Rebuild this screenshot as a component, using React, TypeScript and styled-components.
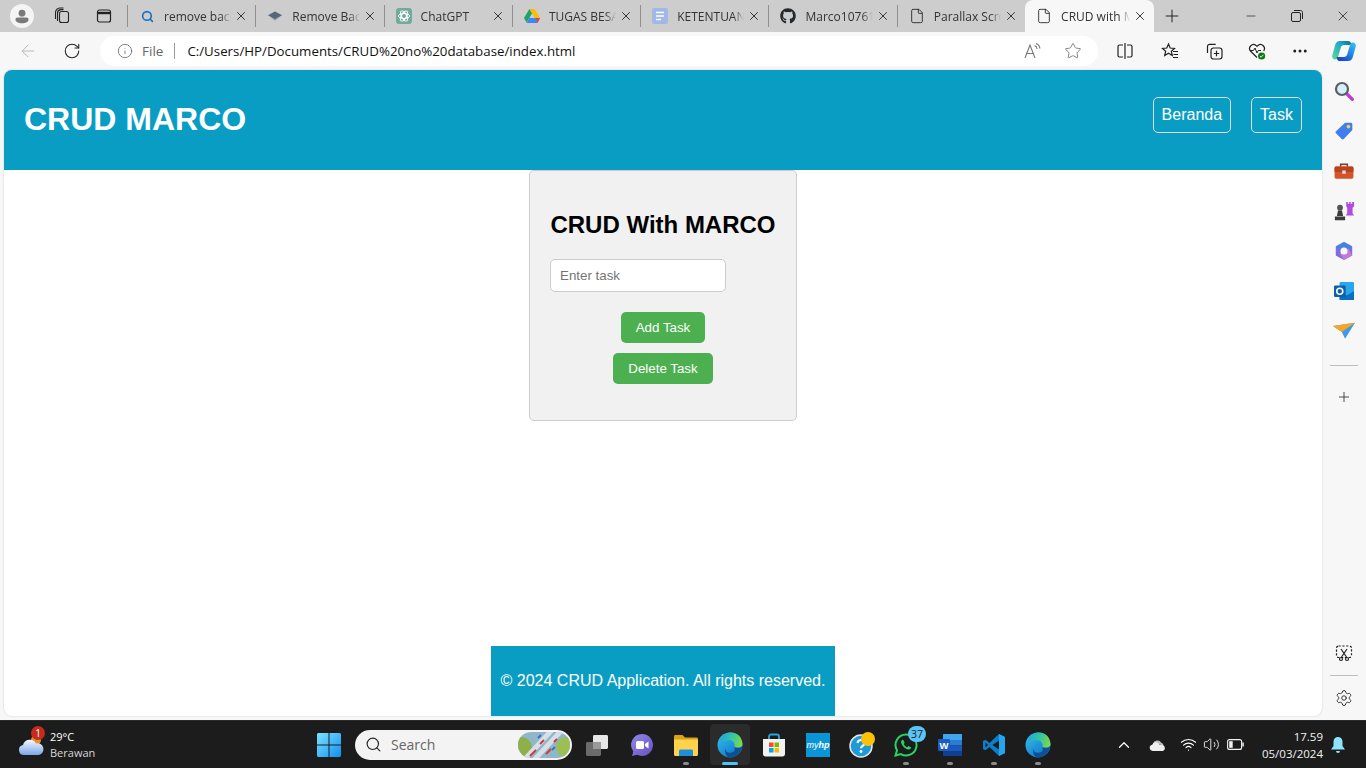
import React from "react";
import styled, { createGlobalStyle } from "styled-components";
import { FaGithub } from "react-icons/fa";
import {
  ArrowLeft, RotateCw, Info, Star, X, Plus, Minus, Search, MoreHorizontal, Settings,
  ChevronUp, Wifi, Volume2, File as FileIcon,
} from "lucide-react";

const Global = createGlobalStyle`
  html, body { margin: 0; padding: 0; height: 100%; overflow: hidden; }
  body { background: #f7f7f7; font-family: "Liberation Sans", Arial, sans-serif; }
  * { box-sizing: border-box; }
`;

const UI = `"Open Sans", "Noto Sans", sans-serif`;
const BRAND = "#0a9dc3";

const Shell = styled.div`display: flex; flex-direction: column; width: 1366px; height: 768px;`;

const TabStrip = styled.div`display: flex; align-items: center; height: 32px; background: #cdcdcd; flex: none;`;
const StripLeft = styled.div`display: flex; align-items: center; width: 127px; height: 32px; flex: none; position: relative;`;
const StripSlot = styled.div<{ $w: number }>`width: ${p => p.$w}px; display: flex; align-items: center; justify-content: center; flex: none;`;
const Tab = styled.div<{ $active?: boolean; $sep?: boolean }>`
  display: flex; align-items: center; flex: none; height: 32px; width: ${p => (p.$active ? 129 : 128.3)}px;
  padding: 0 6px 0 11px; color: #333; font: 12px ${UI};
  background: ${p => (p.$active ? "#f7f7f7" : "transparent")};
  border-radius: ${p => (p.$active ? "8px 8px 0 0" : "0")};
  border-left: ${p => (p.$sep ? "1px solid #8f8f8f" : "none")};
  ${p => p.$sep ? "border-image: linear-gradient(#cdcdcd 6px, #8f8f8f 6px, #8f8f8f 26px, #cdcdcd 26px) 1;" : ""}
`;
const TabIcon = styled.span`width: 16px; height: 16px; flex: none; display: flex; align-items: center; justify-content: center; margin-right: 9px;`;
const TabLabel = styled.span`
  flex: 1; white-space: nowrap; overflow: hidden; min-width: 0;
  -webkit-mask-image: linear-gradient(90deg, #000 84%, transparent 100%);
  mask-image: linear-gradient(90deg, #000 84%, transparent 100%);
`;
const TabClose = styled.span`width: 16px; display: flex; justify-content: center; flex: none; margin-left: 2px;`;
const WindowControls = styled.div`display: flex; margin-left: auto; color: #222;`;
const WinBtn = styled.div`width: 46px; height: 32px; display: flex; align-items: center; justify-content: center;`;

const Toolbar = styled.div`display: flex; align-items: center; height: 38px; background: #f7f7f7; flex: none;`;
const NavSlot = styled.div<{ $w: number }>`width: ${p => p.$w}px; display: flex; justify-content: center; align-items: center; flex: none; color: #222;`;
const AddressBar = styled.div`
  width: 998px; height: 30px; margin: 0 5px 0 0; background: #fff; border-radius: 15px; flex: none;
  display: flex; align-items: center; padding: 0 16px 0 17px; color: #222;
`;
const FileLabel = styled.span`font: 13.5px ${UI}; color: #666; margin-left: 9px;`;
const AddrSep = styled.span`width: 1px; height: 16px; background: #999; margin: 0 13px 0 11px;`;
const Url = styled.span`font: 13.3px ${UI}; color: #111; flex: 1; white-space: nowrap; margin-left: -1px;`;
const AddrActions = styled.div`display: flex; align-items: center; gap: 22px; color: #777;`;
const ActionRow = styled.div`display: flex; align-items: center;`;

const Body = styled.div`display: flex; flex: 1; min-height: 0; padding: 0 0 4px 4px;`;
const Page = styled.div`
  width: 1318px; display: flex; flex-direction: column; background: #fff; border-radius: 8px;
  overflow: hidden; box-shadow: 0 0 2px rgba(0,0,0,.18);
`;
const SiteHeader = styled.header`
  height: 100px; flex: none; background: ${BRAND}; color: #fff; display: flex; align-items: center;
  justify-content: space-between; padding: 0 20px;
`;
const SiteTitle = styled.h1`font: bold 32px "Liberation Sans", Arial, sans-serif; margin: -2px 0 0;`;
const SiteNav = styled.nav`display: flex; gap: 20px; margin-top: -10px;`;
const NavLink = styled.a`
  display: block; color: #fff; font-size: 16px; padding: 8px; border: 1px solid #ddd; border-radius: 5px; line-height: 18px;
`;
const Main = styled.main`flex: 1; display: flex; justify-content: center; align-items: flex-start;`;
const Card = styled.section`
  width: 268px; height: 251px; background: #f1f1f1; border: 1px solid #ccc; border-radius: 5px;
  padding: 20px; display: flex; flex-direction: column; align-items: center;
`;
const CardTitle = styled.h2`font: bold 24px "Liberation Sans", Arial, sans-serif; color: #000; margin: 20px 0; white-space: nowrap; line-height: 28px;`;
const TaskInput = styled.input`
  align-self: flex-start; width: 176px; height: 33px; padding: 8px 9px; border: 1px solid #ccc; border-radius: 5px;
  font: 13.33px "Liberation Sans", Arial, sans-serif; background: #fff; margin: 0 0 20px; outline: none;
  &::placeholder { color: #757575; }
`;
const GreenButton = styled.button`
  height: 31px; padding: 0 15px; margin: 0 0 10px; border: none; border-radius: 5px; background: #4caf50; color: #fff;
  font: 13.33px "Liberation Sans", Arial, sans-serif;
`;
const Footer = styled.footer`
  align-self: center; width: 344px; height: 70px; background: ${BRAND}; color: #fff; font-size: 16px; flex: none;
  display: flex; align-items: center; justify-content: center; white-space: nowrap;
`;

const Side = styled.aside`width: 44px; flex: none; display: flex; flex-direction: column; align-items: center; padding-top: 1px; margin-bottom: -2px; color: #222;`;
const SideSlot = styled.div`width: 44px; height: 40px; display: flex; align-items: center; justify-content: center; flex: none;`;
const SideRule = styled.div<{ $mt: number; $mb: number }>`width: 28px; height: 1px; background: #bdbdbd; margin: ${p => p.$mt}px 0 ${p => p.$mb}px; flex: none;`;
const SideSpacer = styled.div`flex: 1;`;

const Taskbar = styled.div`
  height: 48px; flex: none; background: #1c1c1c; border-top: 1px solid #2c2c2c; display: flex; align-items: center;
  color: #fff; font: 12px ${UI};
`;
const Weather = styled.div`width: 307px; flex: none; display: flex; align-items: center; padding-left: 18px; height: 47px; position: relative;`;
const WeatherBadge = styled.span`
  position: absolute; left: 31px; top: 5px; width: 14px; height: 14px; border-radius: 50%; background: #c42b1c;
  color: #fff; font: 10px ${UI}; display: flex; align-items: center; justify-content: center;
`;
const WeatherText = styled.div`display: flex; flex-direction: column; margin-left: 4px; font: 11px/16px ${UI};`;
const WeatherSub = styled.span`color: #d6d6d6;`;
const AppBtn = styled.div<{ $state?: "on" | "active" }>`
  width: 44px; height: 47px; flex: none; display: flex; align-items: center; justify-content: center; position: relative;
  ${p => p.$state === "active" ? `&::before { content: ""; position: absolute; left: 2px; right: 2px; top: 3px; bottom: 3px; background: #2b2b2b; border-radius: 4px; }` : ""}
  ${p => p.$state ? `&::after { content: ""; position: absolute; bottom: 3px; left: 50%; height: 3px; border-radius: 2px;
      width: ${p.$state === "active" ? 16 : 6}px; margin-left: ${p.$state === "active" ? -8 : -3}px;
      background: ${p.$state === "active" ? "#4fc3f7" : "#8a8a8a"}; }` : ""}
  & > svg { position: relative; z-index: 1; }
`;
const AppBadge = styled.span<{ $bg: string }>`
  position: absolute; z-index: 2; top: 5px; left: 24px; min-width: 14px; height: 16px; padding: 0 3px; border-radius: 8px;
  background: ${p => p.$bg}; color: #10242e; font: 10.5px/16px ${UI}; text-align: center;
`;
const SearchPill = styled.div`
  width: 217px; height: 30px; margin: 0 4px; flex: none; border-radius: 15px; background: #f3f3f3; display: flex; align-items: center;
  padding: 0 2px 0 10px; color: #666; font: 14px ${UI}; gap: 9px;
`;
const SearchText = styled.span`flex: 1;`;
const Tray = styled.div`margin-left: auto; display: flex; align-items: center; padding-right: 19px; height: 47px;`;
const TraySlot = styled.div<{ $w: number }>`width: ${p => p.$w}px; display: flex; align-items: center; justify-content: center; flex: none;`;
const Clock = styled.div`display: flex; flex-direction: column; align-items: flex-end; font: 11.5px/17px ${UI}; color: #f2f2f2; margin: 0 6px 0 0;`;
const HpTile = styled.div`
  width: 24px; height: 24px; background: #0a96d6; color: #fff; font: italic 9px "Liberation Sans", sans-serif;
  display: flex; align-items: center; justify-content: center; position: relative; z-index: 1;
`;
const HpMark = styled.b`font-weight: 700;`;

const Workspaces = () => (
  <svg width="18" height="18" viewBox="0 0 18 18" fill="none" stroke="#222" strokeWidth="1.1">
    <rect x="6.5" y="4.5" width="9" height="11" rx="2" /><path d="M4.5 14V6c0-1.8 1.2-3 3-3.4h3M2.5 12V6c0-2.6 1.6-4.5 4-5h4" />
  </svg>
);
const TabsView = () => (
  <svg width="16" height="16" viewBox="0 0 16 16" fill="none" stroke="#222" strokeWidth="1.2">
    <rect x="1.5" y="2" width="13" height="12" rx="2" /><path d="M1.5 5h13" strokeWidth="2.4" />
  </svg>
);
const Profile = () => (
  <svg width="24" height="24" viewBox="0 0 24 24">
    <circle cx="12" cy="12" r="12" fill="#f4f4f4" /><circle cx="12" cy="9.2" r="3.4" fill="#7a7a7a" />
    <path d="M5.5 15.5c0-1.2 1-1.9 2-1.9h9c1 0 2 .7 2 1.9 0 2.6-2.9 3.7-6.5 3.7s-6.5-1.1-6.5-3.7z" fill="#7a7a7a" />
  </svg>
);
const Diamond = () => (
  <svg width="18" height="12" viewBox="0 0 18 12"><path d="M9 1l8 4.2L9 9.6 1 5.2z" fill="#55677a" /><path d="M3 7.2L9 11l6-3.8L9 9.6z" fill="#8b97a5" /></svg>
);
const GptIcon = () => (
  <svg width="16" height="16" viewBox="0 0 16 16">
    <rect width="16" height="16" rx="3" fill="#74aa9c" />
    <g fill="none" stroke="#fff" strokeWidth=".9"><circle cx="8" cy="8" r="2.6" /><ellipse cx="8" cy="8" rx="5.6" ry="2.6" /><ellipse cx="8" cy="8" rx="5.6" ry="2.6" transform="rotate(60 8 8)" /><ellipse cx="8" cy="8" rx="5.6" ry="2.6" transform="rotate(120 8 8)" /></g>
  </svg>
);
const DriveIcon = () => (
  <svg width="16" height="14" viewBox="0 0 16 14">
    <path d="M5.4 0h5.2l5.4 9h-5.2z" fill="#fbbc04" /><path d="M5.4 0L0 9l2.6 4.6L8 4.4z" fill="#1ea362" />
    <path d="M2.6 14L5.2 9H16l-2.6 5z" fill="#4285f4" />
    <path d="M13.4 14L16 9h-4z" fill="#ea4335" />
  </svg>
);
const DocsIcon = () => (
  <svg width="16" height="16" viewBox="0 0 16 16">
    <rect width="16" height="16" rx="2" fill="#9fb8e8" /><path d="M4 4.5h8M4 8h8M4 11.5h5" stroke="#fff" strokeWidth="1.4" />
  </svg>
);
const ReadAloud = () => (
  <svg width="18" height="16" viewBox="0 0 18 16" fill="none" stroke="#777" strokeWidth="1.1">
    <path d="M1 15L6 2l5 13M2.8 10.5h6.4" /><path d="M10.5 2.5c1.6.6 2.5 1.8 2.7 3.5M12 .5c2.4.8 3.6 2.6 3.9 5" />
  </svg>
);
const SplitScreen = () => (
  <svg width="18" height="18" viewBox="0 0 18 18" fill="none" stroke="#222" strokeWidth="1.2">
    <path d="M7 3H3.500C2.500 3 2 3.700 2 4.500v9c0 .8.500 1.500 1.500 1.500H7M11 3h3.500c1 0 1.500.7 1.500 1.500v9c0 .8-.5 1.500-1.500 1.500H11M9 1v16" />
  </svg>
);
const FavList = () => (
  <svg width="18" height="18" viewBox="0 0 18 18" fill="none" stroke="#222" strokeWidth="1.2">
    <path d="M7.5 2l1.7 4 4.3.4-3.2 2.9 1 4.2-3.8-2.3L3.7 13.5l1-4.2L1.5 6.4l4.3-.4z" /><path d="M12 9.500h5M12.500 12.500h4.500M12 15.500h5" strokeWidth="1" />
  </svg>
);
const Collections = () => (
  <svg width="18" height="18" viewBox="0 0 18 18" fill="none" stroke="#222" strokeWidth="1.2">
    <path d="M2.500 11V4.500a2.200 2.200 0 0 1 2.200-2.200h6" /><rect x="6" y="6" width="11" height="11" rx="2.400" /><path d="M11.500 8.800v5.400M8.800 11.500h5.400" />
  </svg>
);
const Health = () => (
  <svg width="18" height="18" viewBox="0 0 18 18">
    <path d="M9 15.500L2.400 9A4 4 0 0 1 8 3.400L9 4.400l1-1A4 4 0 0 1 15.600 9" fill="none" stroke="#222" strokeWidth="1.200" />
    <path d="M2 8.500h3.500l1.500-2.500 2 5 1.300-2.500H13" fill="none" stroke="#222" strokeWidth="1" />
    <circle cx="13.600" cy="14" r="3.600" fill="#107c10" /><path d="M11.900 14l1.200 1.200 2.200-2.300" stroke="#fff" strokeWidth=".9" fill="none" />
  </svg>
);
const Copilot = () => (
  <svg width="24" height="24" viewBox="0 0 24 24">
    <defs>
      <linearGradient id="cpA" x1="0" y1=".7" x2="1" y2="0"><stop offset="0" stopColor="#4fd3a0" /><stop offset=".55" stopColor="#1ba8c8" /><stop offset="1" stopColor="#0b6a8c" /></linearGradient>
      <linearGradient id="cpB" x1="1" y1="0" x2=".2" y2="1"><stop offset="0" stopColor="#3cc4f5" /><stop offset=".55" stopColor="#1f7fe8" /><stop offset="1" stopColor="#1a3fc8" /></linearGradient>
    </defs>
    <path d="M8 2h8c1.600 0 2.600.8 3 2.300L19.500 6H12c-1.600 0-2.700 1-3.200 2.500L6 18c-.5 1.500-1.300 2.500-3 2.500-2 0-3.300-2-2.700-4.200L3.200 6C3.900 3.500 5.500 2 8 2z" fill="url(#cpA)" />
    <path d="M16 22H8c-1.600 0-2.600-.8-3-2.300L4.500 18H12c1.600 0 2.700-1 3.200-2.500L18 6c.5-1.500 1.300-2.500 3-2.500 2 0 3.300 2 2.700 4.200L20.800 18c-.7 2.500-2.300 4-4.800 4z" fill="url(#cpB)" />
  </svg>
);
const Lens = () => (
  <svg width="20" height="20" viewBox="0 0 18 18">
    <path d="M11 11l5.500 5.500" stroke="#c239d6" strokeWidth="3" strokeLinecap="round" />
    <circle cx="7.200" cy="7.200" r="5.400" fill="#d7eefb" stroke="#5a5f66" strokeWidth="2" />
  </svg>
);
const TagIcon = () => (
  <svg width="20" height="20" viewBox="0 0 18 18">
    <path d="M10 1.500h5.200c.7 0 1.300.6 1.300 1.300V8L8.800 16.200c-.5.500-1.300.5-1.800 0L1.800 11c-.5-.5-.5-1.300 0-1.800z" fill="#3f7df0" />
    <circle cx="13" cy="5" r="1.700" fill="#f6d04d" />
  </svg>
);
const Toolbox = () => (
  <svg width="20" height="18" viewBox="0 0 18 16">
    <path d="M6 4V2h6v2" fill="none" stroke="#7f3a20" strokeWidth="1.400" />
    <rect x="0.500" y="4" width="17" height="11" rx="1.600" fill="#d4532a" /><rect x="0.500" y="4" width="17" height="5" rx="1.200" fill="#b8421d" />
    <rect x="7.500" y="7.500" width="3" height="3" fill="#e8e0d8" />
  </svg>
);
const Chess = () => (
  <svg width="20" height="20" viewBox="0 0 18 18">
    <path d="M11 1h1.400v1.400h1.300V1h1.400v1.400h1.300V1H18v4l-1.300 1v5l1.300 2H10.600l1.300-2V6L11 5z" fill="#b14be0" />
    <circle cx="5.400" cy="6" r="2.600" fill="#555" /><path d="M3.600 8.600h3.600l1 5H2.600zM.8 14h9.200v3.400H.8z" fill="#3b3b3b" />
  </svg>
);
const M365 = () => (
  <svg width="20" height="20" viewBox="0 0 18 18">
    <path d="M9 .8L16.400 5v8L9 17.200 1.600 13V5z" fill="#7f6ce0" /><path d="M9 .8L16.400 5 13 7 9 5 5 7 1.600 5z" fill="#3a86e8" /><path d="M16.400 13 9 17.200 5 11l8-4z" fill="#c37ad9" />
    <circle cx="9" cy="9" r="3.200" fill="#f7f7f7" />
  </svg>
);
const Outlook = () => (
  <svg width="20" height="20" viewBox="0 0 18 18">
    <rect x="5" y="1" width="13" height="16" rx="1" fill="#28a8ea" /><path d="M5 9l6.500 4L18 9v8H5z" fill="#0a6fbf" />
    <rect x="0" y="4" width="10.500" height="10.500" rx="1" fill="#0f5fb0" /><circle cx="5.200" cy="9.200" r="2.700" fill="none" stroke="#fff" strokeWidth="1.400" />
  </svg>
);
const Plane = () => (
  <svg width="22" height="18" viewBox="0 0 20 16">
    <path d="M0 3.500L20 .5 11 15l-3-6z" fill="#3d9be9" /><path d="M0 3.500L20 .5 8 9z" fill="#f5a623" />
  </svg>
);
const Snip = () => (
  <svg width="18" height="18" viewBox="0 0 18 18" fill="none" stroke="#222" strokeWidth="1.200">
    <rect x="1.500" y="2" width="15" height="11.500" rx="2" strokeDasharray="2.200 1.600" /><path d="M6 5l5.500 8M12 5l-5.500 8" /><circle cx="6" cy="15" r="1.500" /><circle cx="12" cy="15" r="1.500" />
  </svg>
);
const Cloud = () => (
  <svg width="28" height="24" viewBox="0 0 28 24">
    <defs><linearGradient id="wc" x1="0" y1="0" x2="0" y2="1"><stop offset="0" stopColor="#f4f8ff" /><stop offset="1" stopColor="#7aa7e8" /></linearGradient></defs>
    <circle cx="18" cy="7" r="5" fill="#e8912a" />
    <path d="M6 22a5 5 0 0 1-1-9.900A7 7 0 0 1 18 10.400 5.800 5.800 0 0 1 21 22z" fill="url(#wc)" />
  </svg>
);
const WinLogo = () => (
  <svg width="24" height="24" viewBox="0 0 24 24">
    <defs><linearGradient id="wl" x1="0" y1="0" x2="1" y2="1"><stop offset="0" stopColor="#7de3ff" /><stop offset="1" stopColor="#0f8ff0" /></linearGradient></defs>
    <path d="M0 1.500C0 .7.7 0 1.500 0h10v11.500H0zM12.500 0h10c.8 0 1.500.7 1.500 1.500v10H12.500zM0 12.500h11.500V24h-10C.7 24 0 23.300 0 22.500zM12.500 12.500H24v10c0 .8-.7 1.500-1.500 1.500h-10z" fill="url(#wl)" />
  </svg>
);
const SearchArt = () => (
  <svg width="52" height="26" viewBox="0 0 52 26">
    <defs><clipPath id="sa"><rect width="52" height="26" rx="13" /></clipPath></defs>
    <g clipPath="url(#sa)">
      <rect width="52" height="26" fill="#8fb6c9" /><circle cx="3" cy="16" r="11" fill="#8eb04a" /><circle cx="48" cy="15" r="10" fill="#9bbf55" />
      <path d="M6 28L34-2M16 28L44-2" stroke="#d6dee6" strokeWidth="5" />
      <path d="M12 24L18 18M22 12l4-4M28 22l5-5M36 10l3-3" stroke="#d23c3c" strokeWidth="2" /><path d="M20 6l3-3M34 18l3-3" stroke="#3a72c9" strokeWidth="2" />
    </g>
  </svg>
);
const TaskView = () => (
  <svg width="26" height="24" viewBox="0 0 26 24">
    <rect x="1" y="9" width="15" height="14" rx="1.400" fill="#6b6b6b" /><rect x="8" y="2" width="15" height="14" rx="1.400" fill="#e6e6e6" />
    <rect x="8" y="9" width="8" height="7" fill="#9a9a9a" />
  </svg>
);
const Meet = () => (
  <svg width="24" height="24" viewBox="0 0 24 24">
    <defs><linearGradient id="mt" x1="0" y1="0" x2="1" y2="1"><stop offset="0" stopColor="#8d8be8" /><stop offset="1" stopColor="#6a4fc0" /></linearGradient></defs>
    <path d="M12 1a11 11 0 1 1-5 20.800L2 23l1.300-4.500A11 11 0 0 1 12 1z" fill="url(#mt)" />
    <rect x="6" y="8" width="8" height="8" rx="1.500" fill="#fff" /><path d="M15 11l3.500-2.500v7L15 13z" fill="#fff" />
  </svg>
);
const Folder = () => (
  <svg width="24" height="24" viewBox="0 0 24 24">
    <path d="M0 3.500C0 2.500.6 2 1.500 2h7L11 4.500h11.500c.9 0 1.500.6 1.500 1.500v2H0z" fill="#d9a21b" />
    <path d="M0 6.500h24v15c0 .9-.6 1.500-1.500 1.500h-21C.6 23 0 22.400 0 21.500z" fill="#ffd24d" />
    <path d="M5 23v-5c0-1 .6-1.600 1.500-1.600h11c.9 0 1.500.6 1.500 1.600v5z" fill="#1d8fd8" />
  </svg>
);
const Edge = ({ id, s = 26 }: { id: string; s?: number }) => (
  <svg width={s} height={s} viewBox="0 0 26 26">
    <defs>
      <linearGradient id={id} x1="0" y1="0" x2=".8" y2="1"><stop offset="0" stopColor="#35c1f1" /><stop offset="1" stopColor="#0d72c4" /></linearGradient>
      <linearGradient id={`${id}g`} x1="0" y1=".3" x2="1" y2=".6"><stop offset="0" stopColor="#1fa8d8" /><stop offset=".5" stopColor="#36c6a0" /><stop offset="1" stopColor="#7fd64b" /></linearGradient>
    </defs>
    <circle cx="13" cy="13" r="12.500" fill={`url(#${id})`} />
    <path d="M3 8C6 2 11 .5 14 .5c7 0 11.500 5.500 11.500 12 0 3-4.500 4-8 2.500 1-4-2.500-7.500-6.500-7-3.500.5-6 2-8 0z" fill={`url(#${id}g)`} />
    <path d="M25.300 14C24.500 20 19 25.500 13 25.500c-3.500 0-5.500-4.500-5-9 1 4.500 5 5.500 9 3 1-1 1-3.500.5-4.500 3 1.500 6.500 1 7.800-1z" fill="#0e4f96" />
  </svg>
);
const Store = () => (
  <svg width="24" height="24" viewBox="0 0 24 24">
    <path d="M7 6V3.500C7 2.300 8 1.500 9 1.500h6c1 0 2 .8 2 2V6" fill="none" stroke="#27a9e0" strokeWidth="1.800" />
    <path d="M1 6h22v15c0 1.400-1 2.500-2.500 2.500h-17C2 23.500 1 22.400 1 21z" fill="#f2f2f2" />
    <rect x="7" y="9.500" width="4.500" height="4.500" fill="#f25022" /><rect x="12.500" y="9.500" width="4.500" height="4.500" fill="#7fba00" />
    <rect x="7" y="15" width="4.500" height="4.500" fill="#00a4ef" /><rect x="12.500" y="15" width="4.500" height="4.500" fill="#ffb900" />
  </svg>
);
const Help = () => (
  <svg width="26" height="26" viewBox="0 0 26 26">
    <circle cx="12" cy="14" r="11" fill="#1e9bd7" stroke="#e8e8e8" strokeWidth="1.500" />
    <path d="M8.500 11c.3-2 1.700-3 3.500-3 2 0 3.500 1.200 3.500 3 0 2.800-3.500 2.800-3.500 5.200" fill="none" stroke="#fff" strokeWidth="2.200" />
    <circle cx="12" cy="19.500" r="1.400" fill="#fff" /><circle cx="19" cy="7" r="7" fill="#ffc107" />
  </svg>
);
const WhatsApp = () => (
  <svg width="24" height="24" viewBox="0 0 24 24" fill="none">
    <path d="M12 1.500a10.500 10.500 0 1 1-5.200 19.600L1.500 22.500l1.500-5.200A10.500 10.500 0 0 1 12 1.500z" stroke="#25d366" strokeWidth="2" />
    <path d="M8 7c-1 1-1.200 2.400-.4 4 1.200 2.500 3 4.200 5.400 5.200 1.600.6 3 .4 3.800-.8.300-.5.300-1 0-1.200l-2-1c-.4-.2-.7 0-1 .4l-.6.700c-1.500-.6-2.800-1.800-3.500-3.300l.6-.7c.3-.4.300-.7.100-1l-.9-2C9.200 6.500 8.500 6.500 8 7z" fill="#25d366" />
  </svg>
);
const Word = () => (
  <svg width="24" height="24" viewBox="0 0 24 24">
    <path d="M6 1h17c.6 0 1 .4 1 1v5H5V2c0-.6.4-1 1-1z" fill="#41a5ee" /><rect x="5" y="7" width="19" height="5.500" fill="#2b7cd3" />
    <rect x="5" y="12.500" width="19" height="5.500" fill="#185abd" /><path d="M5 18h19v4c0 .6-.4 1-1 1H6c-.6 0-1-.4-1-1z" fill="#103f91" />
    <rect x="0" y="6" width="12" height="12" rx="1" fill="#1a5cc0" />
    <text x="6" y="15.500" textAnchor="middle" fontSize="9.500" fontWeight="700" fill="#fff" fontFamily="Liberation Sans, sans-serif">W</text>
  </svg>
);
const VsCode = () => (
  <svg width="24" height="24" viewBox="0 0 24 24">
    <path d="M17 1l6 3v16l-6 3L7.500 14l-4 3.200L1 16v-8l2.500-1.200 4 3.200z" fill="#0d7fc9" />
    <path d="M17 1l6 3v16l-6 3z" fill="#25a5ef" /><path d="M17 7.500L10.500 12l6.500 4.500z" fill="#1c1c1c" /><path d="M3.500 9.500L6 12l-2.500 2.500z" fill="#1c1c1c" />
  </svg>
);
const OneDrive = () => (
  <svg width="17" height="12" viewBox="0 0 17 12">
    <path d="M4 5a4.500 4.500 0 0 1 8.300-1.200A3.500 3.500 0 0 1 14.500 6z" fill="#bdbdbd" />
    <path d="M3.500 12a3.200 3.200 0 0 1-.3-6.300A4 4 0 0 1 10.600 6 3 3 0 0 1 14 12z" fill="#efefef" />
  </svg>
);
const Battery = () => (
  <svg width="17" height="11" viewBox="0 0 17 11" fill="none">
    <rect x=".6" y=".6" width="14" height="9.800" rx="2" stroke="#f2f2f2" strokeWidth="1.100" /><rect x="2.200" y="2.200" width="3.500" height="6.600" fill="#f2f2f2" /><rect x="15.300" y="3.500" width="1.500" height="4" fill="#f2f2f2" />
  </svg>
);
const NotifyBell = () => (
  <svg width="14" height="16" viewBox="0 0 14 16"><path d="M7 0a4.500 4.500 0 0 1 4.500 4.500V9L14 12.500H0L2.500 9V4.500A4.500 4.500 0 0 1 7 0z" fill="#8fe3fb" /><path d="M5 14h4a2 2 0 0 1-4 0z" fill="#8fe3fb" /></svg>
);

const tabs: { label: string; icon: React.ReactNode }[] = [
  { label: "remove background", icon: <Search size={13} color="#1a6fc4" strokeWidth={3} /> },
  { label: "Remove Background", icon: <Diamond /> },
  { label: "ChatGPT", icon: <GptIcon /> },
  { label: "TUGAS BESAR", icon: <DriveIcon /> },
  { label: "KETENTUAN TUGAS", icon: <DocsIcon /> },
  { label: "Marco1076123", icon: <FaGithub size={16} color="#24292e" /> },
  { label: "Parallax Scrolling", icon: <FileIcon size={16} color="#222" strokeWidth={1.3} /> },
];
const sideTop = [<Lens key="a" />, <TagIcon key="b" />, <Toolbox key="c" />, <Chess key="d" />, <M365 key="e" />, <Outlook key="f" />, <Plane key="g" />];

export default function App() {
  return (
    <Shell>
      <Global />
      <TabStrip>
        <StripLeft>
          <StripSlot $w={44}><Profile /></StripSlot>
          <StripSlot $w={36}><Workspaces /></StripSlot>
          <StripSlot $w={47}><TabsView /></StripSlot>
        </StripLeft>
        {tabs.map(t => (
          <Tab key={t.label} $sep>
            <TabIcon>{t.icon}</TabIcon>
            <TabLabel>{t.label}</TabLabel>
            <TabClose><X size={14} color="#222" strokeWidth={1.5} /></TabClose>
          </Tab>
        ))}
        <Tab $active>
          <TabIcon><FileIcon size={16} color="#222" strokeWidth={1.3} /></TabIcon>
          <TabLabel>CRUD with MARCO</TabLabel>
          <TabClose><X size={14} color="#222" strokeWidth={1.5} /></TabClose>
        </Tab>
        <StripSlot $w={36}><Plus size={20} color="#222" strokeWidth={1.2} /></StripSlot>
        <WindowControls>
          <WinBtn><Minus size={14} strokeWidth={1.2} /></WinBtn>
          <WinBtn>
            <svg width="12" height="12" viewBox="0 0 12 12" fill="none" stroke="#222"><rect x=".5" y="2.500" width="9" height="9" rx="1.500" /><path d="M3 .5h6.500c1.200 0 2 .8 2 2V9" /></svg>
          </WinBtn>
          <WinBtn><X size={16} strokeWidth={1.2} /></WinBtn>
        </WindowControls>
      </TabStrip>

      <Toolbar>
        <NavSlot $w={56}><ArrowLeft size={20} color="#b9b9b9" strokeWidth={1.2} /></NavSlot>
        <NavSlot $w={32}><RotateCw size={18} color="#222" strokeWidth={1.4} /></NavSlot>
        <NavSlot $w={12} />
        <AddressBar>
          <Info size={16} color="#666" strokeWidth={1.2} />
          <FileLabel>File</FileLabel>
          <AddrSep />
          <Url>C:/Users/HP/Documents/CRUD%20no%20database/index.html</Url>
          <AddrActions>
            <ReadAloud />
            <Star size={18} strokeWidth={1.2} />
          </AddrActions>
        </AddressBar>
        <ActionRow>
          <NavSlot $w={44}><SplitScreen /></NavSlot>
          <NavSlot $w={46}><FavList /></NavSlot>
          <NavSlot $w={42}><Collections /></NavSlot>
          <NavSlot $w={44}><Health /></NavSlot>
          <NavSlot $w={42}><MoreHorizontal size={18} strokeWidth={2} /></NavSlot>
          <NavSlot $w={45}><Copilot /></NavSlot>
        </ActionRow>
      </Toolbar>

      <Body>
        <Page>
          <SiteHeader>
            <SiteTitle>CRUD MARCO</SiteTitle>
            <SiteNav>
              <NavLink>Beranda</NavLink>
              <NavLink>Task</NavLink>
            </SiteNav>
          </SiteHeader>
          <Main>
            <Card>
              <CardTitle>CRUD With MARCO</CardTitle>
              <TaskInput placeholder="Enter task" />
              <GreenButton>Add Task</GreenButton>
              <GreenButton>Delete Task</GreenButton>
            </Card>
          </Main>
          <Footer>© 2024 CRUD Application. All rights reserved.</Footer>
        </Page>
        <Side>
          {sideTop.map((icon, i) => <SideSlot key={i}>{icon}</SideSlot>)}
          <SideRule $mt={14} $mb={11} />
          <SideSlot><Plus size={16} strokeWidth={1.2} /></SideSlot>
          <SideSpacer />
          <SideSlot><Snip /></SideSlot>
          <SideRule $mt={2} $mb={2} />
          <SideSlot><Settings size={18} strokeWidth={1.2} /></SideSlot>
        </Side>
      </Body>

      <Taskbar>
        <Weather>
          <Cloud />
          <WeatherBadge>1</WeatherBadge>
          <WeatherText>
            <span>29°C</span>
            <WeatherSub>Berawan</WeatherSub>
          </WeatherText>
        </Weather>
        <AppBtn><WinLogo /></AppBtn>
        <SearchPill>
          <Search size={17} color="#222" strokeWidth={1.6} />
          <SearchText>Search</SearchText>
          <SearchArt />
        </SearchPill>
        <AppBtn><TaskView /></AppBtn>
        <AppBtn><Meet /></AppBtn>
        <AppBtn $state="on"><Folder /></AppBtn>
        <AppBtn $state="active"><Edge id="e1" /></AppBtn>
        <AppBtn><Store /></AppBtn>
        <AppBtn><HpTile>my<HpMark>hp</HpMark></HpTile></AppBtn>
        <AppBtn><Help /></AppBtn>
        <AppBtn $state="on"><WhatsApp /><AppBadge $bg="#5cc4f5">37</AppBadge></AppBtn>
        <AppBtn $state="on"><Word /></AppBtn>
        <AppBtn $state="on"><VsCode /></AppBtn>
        <AppBtn $state="on"><Edge id="e2" /></AppBtn>
        <Tray>
          <TraySlot $w={32}><ChevronUp size={18} strokeWidth={1.6} /></TraySlot>
          <TraySlot $w={36}><OneDrive /></TraySlot>
          <TraySlot $w={26}><Wifi size={17} strokeWidth={1.6} /></TraySlot>
          <TraySlot $w={20}><Volume2 size={17} strokeWidth={1.2} /></TraySlot>
          <TraySlot $w={28}><Battery /></TraySlot>
          <TraySlot $w={12} />
          <Clock><span>17.59</span><span>05/03/2024</span></Clock>
          <TraySlot $w={18}><NotifyBell /></TraySlot>
        </Tray>
      </Taskbar>
    </Shell>
  );
}
